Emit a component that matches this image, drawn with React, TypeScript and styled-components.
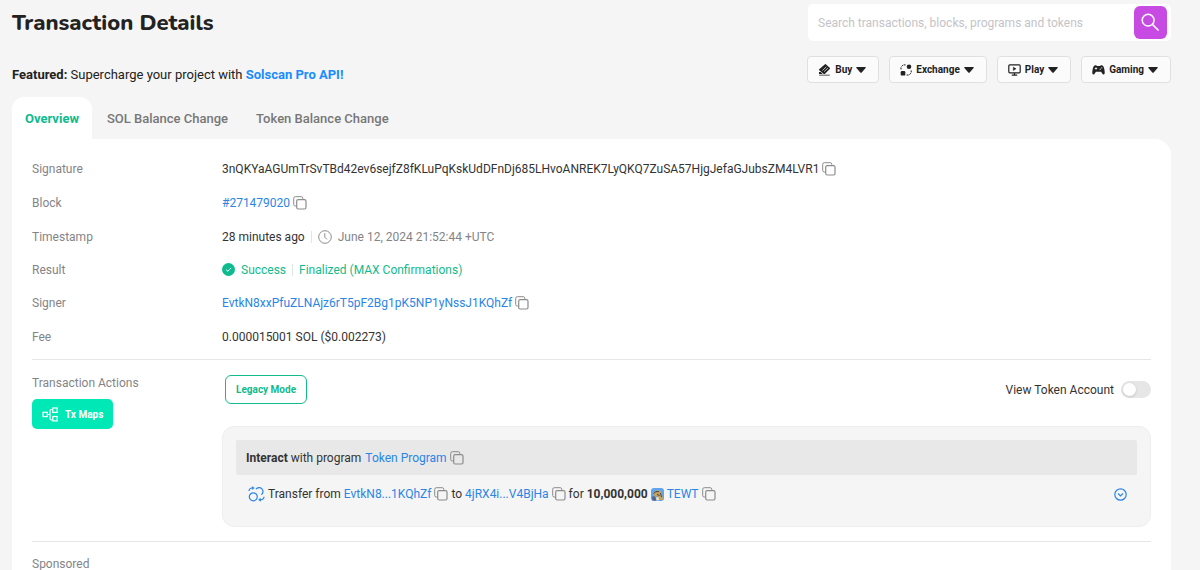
import React from "react";
import styled, { createGlobalStyle } from "styled-components";

const GlobalStyle = createGlobalStyle`
  *, *::before, *::after { box-sizing: border-box; }
  body {
    margin: 0;
    background: #f5f5f5;
    color: #333;
    font-family: Roboto, "Liberation Sans", sans-serif;
    font-size: 12px;
    line-height: 16px;
  }
  button, input { font-family: inherit; }
  #root { overflow: hidden; }
`;

const Page = styled.main`
  display: flex;
  flex-direction: column;
  min-height: 100vh;
  padding: 4px 29px 0 12px;
`;

const TopBar = styled.header`
  display: flex;
  justify-content: space-between;
  align-items: center;
  gap: 24px;
`;

const Title = styled.h1`
  margin: 0;
  color: #222;
  font-family: "Nunito", "Open Sans", sans-serif;
  font-size: 22px;
  font-weight: 800;
  line-height: 36px;
`;

const SearchForm = styled.form`
  display: flex;
  align-items: center;
  width: 363px;
  height: 37px;
  padding: 2px 4px 2px 2px;
  border-radius: 5px;
  background: #fff;
`;

const SearchInput = styled.input`
  flex: 1;
  min-width: 0;
  padding: 0 8px;
  border: 0;
  outline: 0;
  background: transparent;
  color: #333;
  font-size: 12px;
  &::placeholder { color: #c4c4c8; opacity: 1; }
`;

const SearchButton = styled.button`
  display: grid;
  place-items: center;
  width: 33px;
  height: 33px;
  padding: 0;
  border: 0;
  border-radius: 6px;
  background: #c74ae3;
  color: #fff;
`;

const SubBar = styled.div`
  display: flex;
  justify-content: space-between;
  align-items: center;
  gap: 24px;
  margin-top: 15px;
`;

const Featured = styled.p`
  margin: 0;
  padding-top: 11px;
  color: #222;
  font-size: 13px;
  line-height: 16px;
`;

const Link = styled.a<{ $bold?: boolean }>`
  color: ${(p) => (p.$bold ? "#1a8cff" : "#2a85e6")};
  font-weight: ${(p) => (p.$bold ? 700 : 400)};
  text-decoration: none;
`;

const Filters = styled.nav`
  display: flex;
  gap: 10px;
`;

const FilterButton = styled.button`
  display: flex;
  align-items: center;
  gap: 4px;
  height: 27px;
  padding: 0 12px 0 10px;
  border: 1px solid #e0e0e0;
  border-radius: 4px;
  background: #fbfbfb;
  color: #222;
  font-size: 10px;
  font-weight: 700;
  white-space: nowrap;
`;

const Tabs = styled.div`
  display: flex;
  gap: 2px;
  margin-top: 14px;
`;

const Tab = styled.button<{ $active?: boolean }>`
  height: 42px;
  padding: 0 13px;
  border: 0;
  border-radius: 12px 12px 0 0;
  background: ${(p) => (p.$active ? "#fff" : "transparent")};
  color: ${(p) => (p.$active ? "#0dbb8f" : "#777")};
  font-size: 13px;
  font-weight: ${(p) => (p.$active ? 700 : 500)};
`;

const Card = styled.section`
  flex: 1;
  padding: 13px 20px 0;
  border-radius: 0 16px 0 0;
  background: #fff;
`;

const Details = styled.dl`
  margin: 0;
  padding-bottom: 6px;
`;

const Row = styled.div`
  display: flex;
  align-items: center;
  min-height: 33px;
`;

const Label = styled.dt`
  flex: 0 0 190px;
  color: #848488;
`;

const Value = styled.dd`
  display: flex;
  align-items: center;
  margin: 0;
  padding: 8px 0;
`;

const Muted = styled.span`
  color: #848488;
`;

const Positive = styled.span`
  color: #12ba8c;
`;

const Separator = styled.span`
  width: 1px;
  height: 12px;
  margin: 0 6px;
  background: #e4e4e4;
`;

const Divider = styled.hr`
  height: 1px;
  margin: 0;
  border: 0;
  background: #e6e6e6;
`;

const IconSlot = styled.span`
  display: inline-flex;
  margin-right: 6px;
`;

const CopyButton = styled.button`
  display: inline-flex;
  align-items: center;
  height: 18px;
  margin-left: 3px;
  padding: 0;
  border: 0;
  background: transparent;
  color: #8c8c8c;
`;

const Actions = styled.div`
  display: flex;
  padding: 15px 0 14px;
`;

const ActionsSide = styled.div`
  flex: 0 0 190px;
  color: #848488;
`;

const MapsButton = styled.button`
  display: flex;
  align-items: center;
  gap: 6px;
  height: 30px;
  margin-top: 8px;
  padding: 0 10px;
  border: 0;
  border-radius: 5px;
  background: #00e8b5;
  color: #fff;
  font-size: 10px;
  font-weight: 700;
`;

const ActionsMain = styled.div`
  flex: 1;
  min-width: 0;
`;

const ModeBar = styled.div`
  display: flex;
  align-items: center;
  justify-content: space-between;
  height: 29px;
  margin-bottom: 22px;
  padding-left: 3px;
`;

const LegacyButton = styled.button`
  height: 29px;
  padding: 0 10px;
  border: 1px solid #12ba8c;
  border-radius: 6px;
  background: #fff;
  color: #12ba8c;
  font-size: 10px;
  font-weight: 700;
`;

const SwitchLabel = styled.label`
  display: flex;
  align-items: center;
  gap: 7px;
`;

const Switch = styled.input`
  display: flex;
  align-items: center;
  width: 30px;
  height: 17px;
  margin: 0;
  padding: 2px;
  border-radius: 9px;
  background: #e6e6e6;
  appearance: none;
  &::before {
    content: "";
    width: 13px;
    height: 13px;
    border-radius: 50%;
    background: #fff;
    box-shadow: 0 1px 3px rgba(0, 0, 0, 0.15);
  }
  &:checked { justify-content: flex-end; background: #00e8b5; }
`;

const Panel = styled.div`
  padding: 13px;
  border: 1px solid #eee;
  border-radius: 12px;
  background: #f5f5f5;
`;

const ProgramBar = styled.div`
  display: flex;
  align-items: center;
  gap: 4px;
  height: 35px;
  padding: 0 10px;
  border-radius: 2px;
  background: #e8e8e8;
`;

const TransferRow = styled.div`
  display: flex;
  align-items: center;
  gap: 3px;
  height: 38px;
  padding: 0 10px 0 12px;
`;

const WithCopy = styled.span`
  display: inline-flex;
  align-items: center;
`;

const ExpandButton = styled.button`
  display: inline-flex;
  margin-left: auto;
  padding: 0;
  border: 0;
  background: transparent;
  color: #2a85e6;
`;

const Sponsored = styled.div`
  padding-top: 14px;
  color: #848488;
`;

function Copy() {
  return (
    <CopyButton type="button" aria-label="Copy">
      <svg width="14" height="14" viewBox="0 0 14 14" fill="none" stroke="currentColor">
        <path d="M3.5 10H2.3A1.6 1.6 0 0 1 .7 8.400V2.300A1.600 1.600 0 0 1 2.300.7H8.200A1.600 1.600 0 0 1 9.800 2.300V3" />
        <rect x="3.700" y="3.700" width="9.300" height="9.300" rx="1.500" strokeWidth="1.200" />
      </svg>
    </CopyButton>
  );
}

function Caret() {
  return (
    <svg width="10" height="6" viewBox="0 0 10 6" fill="currentColor">
      <path d="M.8 0h8.400c.6 0 .8.600.4 1L5.700 5.500a1 1 0 0 1-1.400 0L.4 1C0 .6.2 0 .8 0z" />
    </svg>
  );
}

const filters = [
  {
    name: "Buy",
    icon: (
      <svg width="13" height="12" viewBox="0 0 13 12" fill="currentColor">
        <path d="M6.700.4a1 1 0 0 1 1.400 0l3.600 3.300a1 1 0 0 1 0 1.400L7 9.700a1 1 0 0 1-1.400 0L1.200 6.300a.7.7 0 0 1 0-1z" />
        <path d="M4.300 6.600 8.300 2.800M6.100 7.600l3.800-3.500" stroke="#fbfbfb" strokeWidth=".7" />
        <path d="M1 8.100h1.700l2.100 2H1zM1.200 10.700h10.600v.8H1.200z" />
      </svg>
    ),
  },
  {
    name: "Exchange",
    icon: (
      <svg width="12" height="12" viewBox="0 0 12 12" fill="currentColor">
        <circle cx="9" cy="2.700" r="2.300" />
        <rect x=".7" y="7" width="4.600" height="4.600" rx="1.200" />
        <path d="M1 5V3.800M1.800 2.200l.8-.8M4 .9h1.200M11.200 6.800V8M10.500 9.500l-.8.900M8.200 11H7" fill="none" stroke="currentColor" strokeLinecap="round" />
      </svg>
    ),
  },
  {
    name: "Play",
    icon: (
      <svg width="13" height="12" viewBox="0 0 13 12" fill="none" stroke="currentColor" strokeWidth="1.200">
        <rect x=".8" y=".8" width="11.400" height="8" rx="1" />
        <path d="M6.500 9v2M3.800 11.200h5.400" />
        <path d="M5.300 3.200v3.200L8 4.800z" fill="currentColor" strokeWidth=".5" />
      </svg>
    ),
  },
  {
    name: "Gaming",
    icon: (
      <svg width="13" height="12" viewBox="0 0 13 12">
        <path d="M3.300 1.200c1 0 1.200.7 2 .7h2.400c.8 0 1-.7 2-.7 2 0 3 4.200 3 7.500 0 2.300-1.700 2.200-2.500.8L9.100 7.700H3.900L2.800 9.500C2 10.900.3 11 .3 8.700c0-3.300 1-7.500 3-7.500z" fill="currentColor" />
        <path d="M4 3.300v2.400M2.800 4.500h2.400" stroke="#fff" strokeWidth=".8" />
        <circle cx="8.200" cy="5.200" r=".6" fill="#fff" />
        <circle cx="9.800" cy="3.800" r=".6" fill="#fff" />
      </svg>
    ),
  },
];

export default function App() {
  return (
    <>
      <GlobalStyle />
      <Page>
        <TopBar>
          <Title>Transaction Details</Title>
          <SearchForm role="search">
            <SearchInput aria-label="Search" placeholder="Search transactions, blocks, programs and tokens" />
            <SearchButton type="button" aria-label="Submit search">
              <svg width="19" height="19" viewBox="0 0 20 20" fill="none" stroke="currentColor" strokeWidth="1.600">
                <circle cx="7.500" cy="7.500" r="6.200" />
                <path d="M12 12 18.500 18.500" />
              </svg>
            </SearchButton>
          </SearchForm>
        </TopBar>

        <SubBar>
          <Featured>
            <b>Featured:</b> Supercharge your project with <Link $bold href="#pro">Solscan Pro API!</Link>
          </Featured>
          <Filters>
            {filters.map((f) => (
              <FilterButton type="button" key={f.name}>
                {f.icon}
                {f.name}
                <Caret />
              </FilterButton>
            ))}
          </Filters>
        </SubBar>

        <Tabs role="tablist">
          <Tab $active role="tab" aria-selected="true">Overview</Tab>
          <Tab role="tab" aria-selected="false">SOL Balance Change</Tab>
          <Tab role="tab" aria-selected="false">Token Balance Change</Tab>
        </Tabs>

        <Card>
          <Details>
            <Row>
              <Label>Signature</Label>
              <Value>
                3nQKYaAGUmTrSvTBd42ev6sejfZ8fKLuPqKskUdDFnDj685LHvoANREK7LyQKQ7ZuSA57HjgJefaGJubsZM4LVR1
                <Copy />
              </Value>
            </Row>
            <Row>
              <Label>Block</Label>
              <Value>
                <Link href="#block">#271479020</Link>
                <Copy />
              </Value>
            </Row>
            <Row>
              <Label>Timestamp</Label>
              <Value>
                28 minutes ago
                <Separator />
                <IconSlot>
                  <svg width="14" height="14" viewBox="0 0 14 14" fill="none" stroke="#8c8c8c">
                    <circle cx="7" cy="7" r="6.300" />
                    <path d="M6.800 3.200v4l2.200 2.200" />
                  </svg>
                </IconSlot>
                <Muted>June 12, 2024 21:52:44 +UTC</Muted>
              </Value>
            </Row>
            <Row>
              <Label>Result</Label>
              <Value>
                <IconSlot>
                  <svg width="13" height="13" viewBox="0 0 13 13" fill="none">
                    <circle cx="6.500" cy="6.500" r="6.500" fill="#0dbb8f" />
                    <path d="M4.100 6.600 5.900 8.300 9 4.900" stroke="#fff" />
                  </svg>
                </IconSlot>
                <Positive>Success</Positive>
                <Separator />
                <Positive>Finalized (MAX Confirmations)</Positive>
              </Value>
            </Row>
            <Row>
              <Label>Signer</Label>
              <Value>
                <Link href="#signer">EvtkN8xxPfuZLNAjz6rT5pF2Bg1pK5NP1yNssJ1KQhZf</Link>
                <Copy />
              </Value>
            </Row>
            <Row>
              <Label>Fee</Label>
              <Value>0.000015001 SOL ($0.002273)</Value>
            </Row>
          </Details>

          <Divider />

          <Actions>
            <ActionsSide>
              Transaction Actions
              <MapsButton type="button">
                <svg width="17" height="15" viewBox="0 0 17 15" fill="none" stroke="currentColor" strokeWidth="1.200">
                  <rect x="1" y="5.300" width="4.300" height="4.300" />
                  <rect x="10.800" y="1" width="4.400" height="4.400" />
                  <rect x="10.800" y="9.500" width="4.400" height="4.400" />
                  <path d="M5.300 7.500H8M10.800 2.500H9.500A1.500 1.500 0 0 0 8 4v7.500A1.500 1.500 0 0 0 9.500 13h1.300" />
                </svg>
                Tx Maps
              </MapsButton>
            </ActionsSide>
            <ActionsMain>
              <ModeBar>
                <LegacyButton type="button">Legacy Mode</LegacyButton>
                <SwitchLabel>
                  View Token Account
                  <Switch type="checkbox" role="switch" />
                </SwitchLabel>
              </ModeBar>
              <Panel>
                <ProgramBar>
                  <span><b>Interact</b> with program</span>
                  <WithCopy>
                    <Link href="#program">Token Program</Link>
                    <Copy />
                  </WithCopy>
                </ProgramBar>
                <TransferRow>
                  <svg width="17" height="16" viewBox="0 0 17 16" fill="none" stroke="#2a85e6" strokeWidth="1.200">
                    <circle cx="5.300" cy="10.800" r="4" />
                    <path d="M8 3.200a3.900 3.900 0 1 1 5.400 5.500M1 5A3 3 0 0 1 4 2h1M16 10.800a3 3 0 0 1-3 3h-1.500" />
                    <path d="M4.300.6 6.300 2 4.300 3.500zM12.500 12.300l-2 1.500 2 1.500z" fill="#2a85e6" strokeWidth=".5" />
                  </svg>
                  <span>Transfer from</span>
                  <WithCopy>
                    <Link href="#from">EvtkN8...1KQhZf</Link>
                    <Copy />
                  </WithCopy>
                  <span>to</span>
                  <WithCopy>
                    <Link href="#to">4jRX4i...V4BjHa</Link>
                    <Copy />
                  </WithCopy>
                  <span>for <b>10,000,000</b></span>
                  <svg width="13" height="13" viewBox="0 0 13 13">
                    <rect width="13" height="13" rx="3" fill="#5ea4ee" />
                    <path d="M2 6Q3 2.500 6.500 2.300 10.500 2.500 11.300 7L12 12H8L6.500 8 4 9z" fill="#c2a263" />
                    <path d="M2.500 5.500 5 3.500l3 .3M6 6.500l2.500 1M9.500 5l1 4" stroke="#4b4238" fill="none" />
                    <path d="M1 8.500h3l1.500 4H1.500z" fill="#59617e" />
                    <path d="M5 9.500 7.500 9l.5 3.500H5.500z" fill="#eee3c4" />
                  </svg>
                  <WithCopy>
                    <Link href="#token">TEWT</Link>
                    <Copy />
                  </WithCopy>
                  <ExpandButton type="button" aria-label="Expand">
                    <svg width="13" height="13" viewBox="0 0 13 13" fill="none" stroke="currentColor" strokeWidth="1.200">
                      <circle cx="6.500" cy="6.500" r="5.700" />
                      <path d="M4 5.500l2.500 2.400L9 5.500" />
                    </svg>
                  </ExpandButton>
                </TransferRow>
              </Panel>
            </ActionsMain>
          </Actions>

          <Divider />
          <Sponsored>Sponsored</Sponsored>
        </Card>
      </Page>
    </>
  );
}
